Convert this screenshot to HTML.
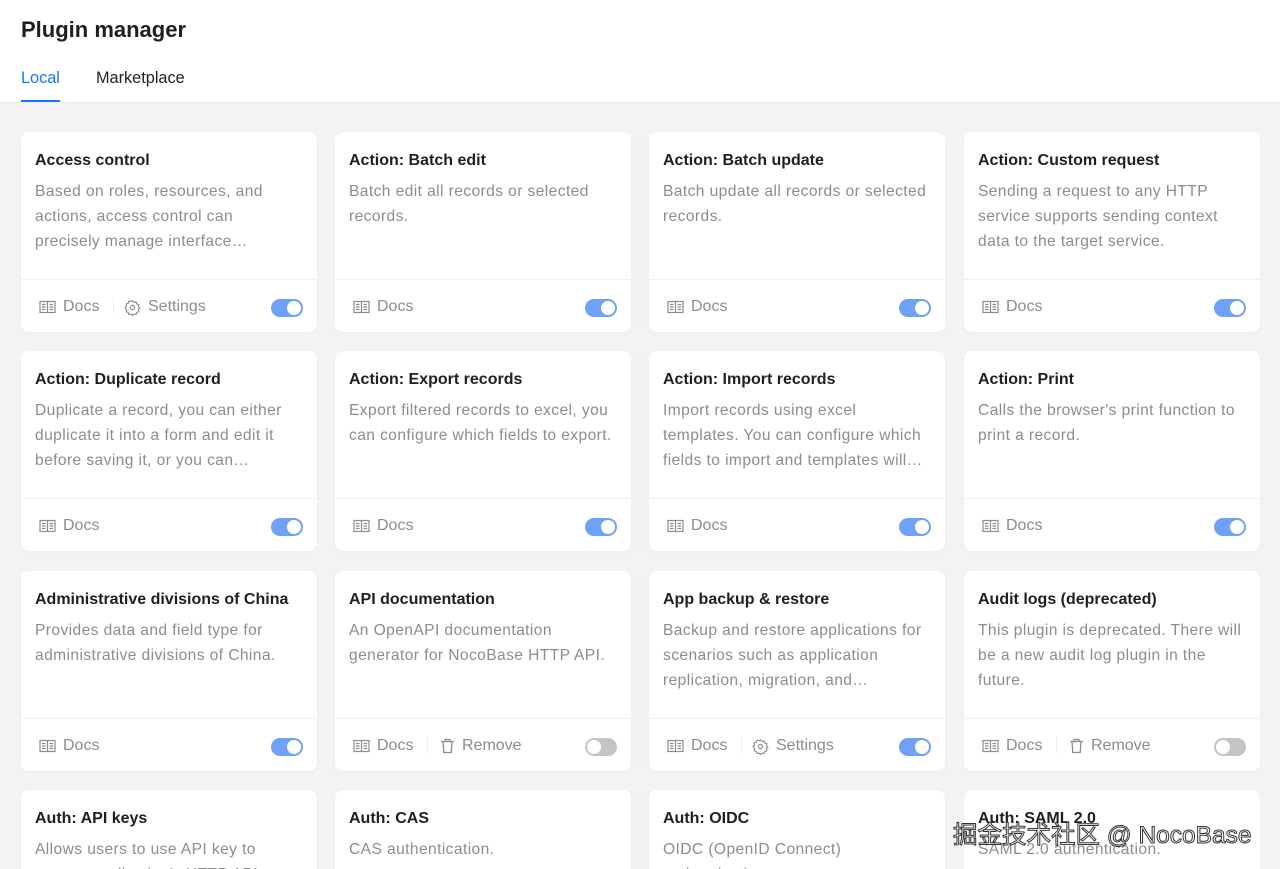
<!DOCTYPE html>
<html><head><meta charset="utf-8"><style>
*{box-sizing:border-box;margin:0;padding:0}
html,body{width:1280px;height:869px;overflow:hidden}
body{background:#f3f3f3;font-family:"Liberation Sans",Arial,sans-serif;position:relative}
.hdr{background:#fff;height:103px;position:relative;border-bottom:1px solid #ececec}
.hdr h1{position:absolute;left:21px;top:17px;font-size:22px;font-weight:700;color:#1f1f1f}
.tab{position:absolute;top:69px;font-size:16.3px;color:#1f1f1f}
.tab.on{color:#1677ff;left:21px}
.ul{position:absolute;left:21px;top:100px;width:39px;height:2px;background:#1677ff}
.card{position:absolute;width:296px;height:200px;background:#fff;border-radius:8px;box-shadow:0 1px 3px rgba(0,0,0,.04);overflow:hidden}
.card .t{position:absolute;left:14px;top:20px;font-size:16px;font-weight:700;color:#1f1f1f}
.card .d{position:absolute;left:14px;top:47px;right:15px;font-size:15.6px;letter-spacing:.4px;line-height:25px;color:#8c8c8c}
.card .f{position:absolute;left:0;right:0;top:147px;height:53px;border-top:1px solid #f0f0f0}
.fi{position:absolute;top:18px;font-size:16px;color:#8c8c8c;display:flex;align-items:center;gap:7px}
.sep{position:absolute;top:18px;width:1px;height:16px;background:#eee}
.sw{position:absolute;right:14px;top:19px;width:32px;height:18px;border-radius:9px;background:#6ea1f7}
.sw::after{content:"";position:absolute;right:2px;top:2px;width:14px;height:14px;border-radius:50%;background:#fff}
.sw.off{background:#c4c4c4}.sw.off::after{right:auto;left:2px}
.wm{position:absolute;left:953px;top:816px;font-size:24.5px;color:#fff;white-space:nowrap;font-family:"Liberation Sans","Noto Sans CJK SC",sans-serif;-webkit-text-stroke:1px #333}
</style></head><body>
<div class="hdr"><h1>Plugin manager</h1><span class="tab on">Local</span><span class="tab" style="left:96px">Marketplace</span><div class="ul"></div></div>
<div id="c"></div>
<script>
const book='<svg width="17" height="14" viewBox="0 0 17 14" fill="none" stroke="#8c8c8c" stroke-width="1.2"><rect x="1" y="1.5" width="15" height="11"/><path d="M8.5 1.5v11M3 4.5h3.5M3 7h3.5M3 9.5h3.5M10.5 4.5H14M10.5 7H14M10.5 9.5H14"/></svg>';
const gear='<svg width="17" height="17" viewBox="0 0 24 24" fill="none" stroke="#8c8c8c" stroke-width="1.6"><circle cx="12" cy="12" r="3"/><path d="M12 2.5l2 2.2 3-.6 1 2.9 2.9 1-.6 3 2.2 2-2.2 2 .6 3-2.9 1-1 2.9-3-.6-2 2.2-2-2.2-3 .6-1-2.9-2.9-1 .6-3L1.5 12l2.2-2-.6-3 2.9-1 1-2.9 3 .6z"/></svg>';
const trash='<svg width="15" height="16" viewBox="0 0 15 16" fill="none" stroke="#8c8c8c" stroke-width="1.3"><path d="M1 3.5h13M5 3.5V1.5h5v2M3 3.5l.8 11h7.4l.8-11"/></svg>';
const D=[
["Access control","Based on roles, resources, and actions, access control can precisely manage interface…","s",1],
["Action: Batch edit","Batch edit all records or selected records.","",1],
["Action: Batch update","Batch update all records or selected records.","",1],
["Action: Custom request","Sending a request to any HTTP service supports sending context data to the target service.","",1],
["Action: Duplicate record","Duplicate a record, you can either duplicate it into a form and edit it before saving it, or you can…","",1],
["Action: Export records","Export filtered records to excel, you can configure which fields to export.","",1],
["Action: Import records","Import records using excel templates. You can configure which fields to import and templates will…","",1],
["Action: Print","Calls the browser's print function to print a record.","",1],
["Administrative divisions of China","Provides data and field type for administrative divisions of China.","",1],
["API documentation","An OpenAPI documentation generator for NocoBase HTTP API.","r",0],
["App backup & restore","Backup and restore applications for scenarios such as application replication, migration, and…","s",1],
["Audit logs (deprecated)","This plugin is deprecated. There will be a new audit log plugin in the future.","r",0],
["Auth: API keys","Allows users to use API key to access application's HTTP API","",1],
["Auth: CAS","CAS authentication.","",1],
["Auth: OIDC","OIDC (OpenID Connect) authentication","",1],
["Auth: SAML 2.0","SAML 2.0 authentication.","",1]];
const xs=[21,335,649,964],ys=[132,351,571,790];let h='';
D.forEach((d,i)=>{const x=xs[i%4],y=ys[Math.floor(i/4)];
let f='<span class="fi" style="left:18px">'+book+'Docs</span>';
if(d[2]=='s')f+='<span class="sep" style="left:92px"></span><span class="fi" style="left:103px">'+gear+'Settings</span>';
if(d[2]=='r')f+='<span class="sep" style="left:92px"></span><span class="fi" style="left:105px">'+trash+'Remove</span>';
f+='<span class="sw'+(d[3]?'':' off')+'"></span>';
h+='<div class="card" style="left:'+x+'px;top:'+y+'px"><div class="t">'+d[0]+'</div><div class="d">'+d[1]+'</div><div class="f">'+f+'</div></div>';});
document.getElementById('c').innerHTML=h;
</script>
<div class="wm">掘金技术社区 @ NocoBase</div>
</body></html>
